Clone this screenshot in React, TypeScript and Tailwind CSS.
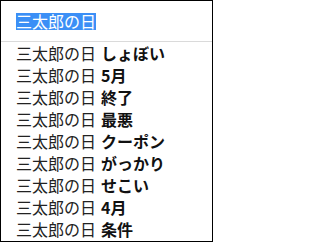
import React from "react";

const items = ["しょぼい", "5月", "終了", "最悪", "クーポン", "がっかり", "せこい", "4月", "条件"];

export default function App() {
  return (
    <div
      className="w-[213px] h-[242px] border border-black bg-white flex flex-col overflow-hidden"
      style={{ fontFamily: '"Noto Sans CJK JP", "Noto Sans", sans-serif' }}
    >
      <div className="h-[41px] shrink-0 flex items-center pl-[15px] border-b border-[#dadada]">
        <span className="inline-block h-[17px] leading-[17px] bg-[#3b8ff6] text-white text-[16px]">三太郎の日</span>
      </div>
      <div className="flex flex-col">
        {items.map((t) => (
          <div key={t} className="h-[22px] leading-[22px] pl-[15px] text-[16px] text-[#222] whitespace-nowrap">
            <span>三太郎の日</span>
            <span className="ml-[5px] font-bold text-[#111]">{t}</span>
          </div>
        ))}
      </div>
    </div>
  );
}
